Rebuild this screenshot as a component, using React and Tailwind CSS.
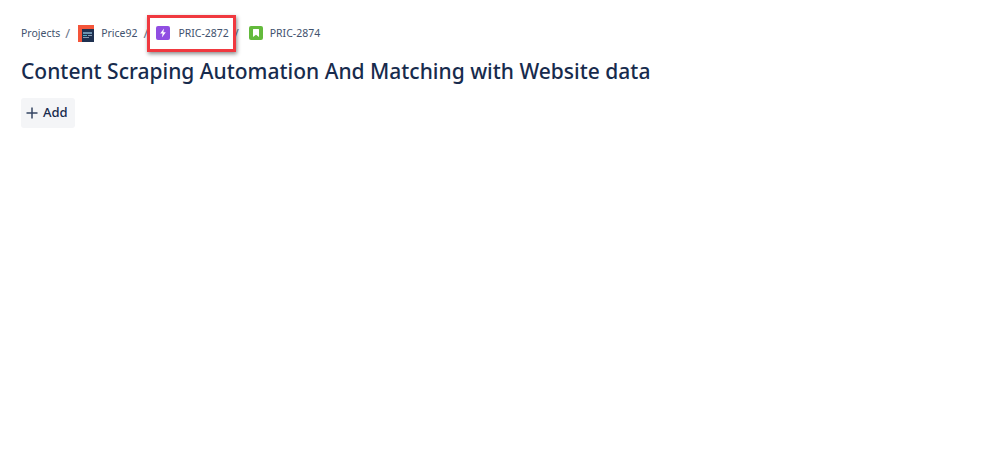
import React from 'react';

const ProjectIcon = () => (
  <svg width="16" height="17" viewBox="0 0 16 17" className="shrink-0">
    <rect width="16" height="17" fill="#f4553a" />
    <rect x="4" y="4" width="12" height="13" fill="#1f3150" />
    <rect x="5" y="7" width="9" height="2" fill="#6f93b0" />
    <rect x="5" y="10" width="4" height="1" fill="#4fb0c6" />
    <rect x="10" y="10" width="4" height="1" fill="#8a9bb0" />
    <rect x="5" y="12" width="6" height="1" fill="#8a9bb0" />
  </svg>
);

const EpicIcon = () => (
  <svg width="14" height="14" viewBox="0 0 14 14" className="shrink-0">
    <rect width="14" height="14" rx="2" fill="#904ee2" />
    <path d="M8 2.5 4.2 7.6h2.4l-.7 3.9 3.9-5.3H7.3z" fill="#fff" />
  </svg>
);

const StoryIcon = () => (
  <svg width="14" height="14" viewBox="0 0 14 14" className="shrink-0">
    <rect width="14" height="14" rx="2" fill="#63ba3c" />
    <path d="M4.5 3h5a.5.5 0 0 1 .5.5V11L7 8.8 4 11V3.5a.5.5 0 0 1 .5-.5z" fill="#fff" />
  </svg>
);

const Sep = ({ className }) => <span className={`text-[13px] text-[#6b778c] ${className}`}>/</span>;

export default function App() {
  return (
    <div className="relative h-[473px] w-[998px] overflow-hidden bg-white pl-[21px] pt-[24px] font-['Noto_Sans',sans-serif] text-[#42526e]">
      <nav className="flex h-[18px] items-center text-[10.5px] leading-[18px]">
        <span>Projects</span>
        <Sep className="ml-[5px]" />
        <span className="ml-[8px] flex items-center">
          <ProjectIcon />
        </span>
        <span className="ml-[7px]">Price92</span>
        <Sep className="ml-[6px]" />
        <span className="ml-[8px] flex items-center">
          <EpicIcon />
        </span>
        <span className="ml-[8px]">PRIC-2872</span>
        <Sep className="ml-[5px]" />
        <span className="ml-[10px] flex items-center">
          <StoryIcon />
        </span>
        <span className="ml-[7px]">PRIC-2874</span>
      </nav>
      <h1 className="mt-[13px] text-[21px] font-medium leading-[32px] text-[#172b4d]">
        Content Scraping Automation And Matching with Website data
      </h1>
      <button className="mt-[11px] flex h-[30px] w-[54px] items-center justify-start gap-[5px] rounded-[3px] bg-[#f4f5f7] pl-[5px] text-[13px] font-medium text-[#172b4d]">
        <svg width="12" height="12" viewBox="0 0 12 12" className="shrink-0">
          <path d="M6 .5v11M.5 6h11" stroke="#344563" strokeWidth="1.5" />
        </svg>
        Add
      </button>
      {/* red highlight drawn over the screenshot */}
      <div className="absolute left-[147px] top-[15px] h-[37px] w-[89px] border-[3px] border-[#f0393f] shadow-[1px_2px_4px_rgba(0,0,0,0.45)]" />
    </div>
  );
}
